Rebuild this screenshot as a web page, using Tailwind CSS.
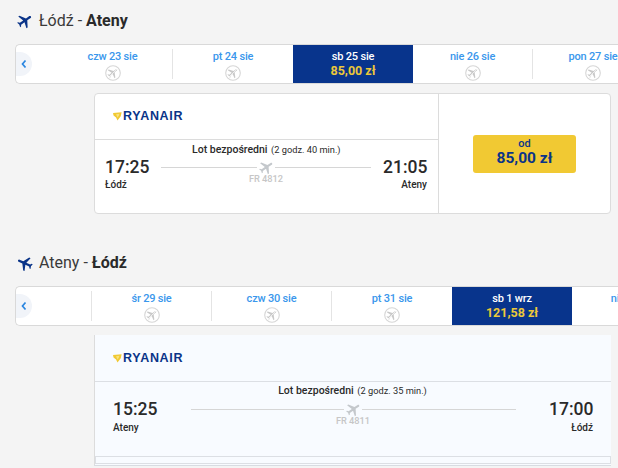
<!DOCTYPE html>
<html lang="pl">
<head>
  <meta charset="UTF-8">
  <meta name="viewport" content="width=device-width, initial-scale=1.0">
  <title>Loty Łódź - Ateny</title>
  <script src="https://cdn.jsdelivr.net/npm/@tailwindcss/browser@4"></script>
</head>
<body class="w-[618px] h-[468px] overflow-hidden bg-[#f4f4f4] font-['Roboto',sans-serif] text-[#2a2a2a]">
  <svg class="hidden">
    <symbol id="plane" viewBox="0 0 24 24"><path d="M21 16v-2l-8-5V3.5c0-.83-.67-1.5-1.5-1.5S10 2.67 10 3.5V9l-8 5v2l8-2.5V19l-2 1.5V22l3.5-1 3.5 1v-1.5L13 19v-5.5l8 2.5z"/></symbol>
    <symbol id="noflight" viewBox="0 0 16 16">
      <circle cx="8" cy="8" r="7.3" fill="#fff" stroke="#d6d6d6" stroke-width="1.1"/>
      <g transform="rotate(50 8 8) translate(1.4 1.4) scale(.55)" fill="#c9c9c9"><path d="M21 16v-2l-8-5V3.5c0-.83-.67-1.5-1.5-1.5S10 2.67 10 3.5V9l-8 5v2l8-2.5V19l-2 1.5V22l3.5-1 3.5 1v-1.5L13 19v-5.5l8 2.5z"/></g>
      <path d="M3.5 12.5 12.5 3.5" stroke="#fff" stroke-width=".7"/>
    </symbol>
    <symbol id="harp" viewBox="0 0 10 10"><path d="M0 1.2 9.6.4 8.6 4.6 5 9.4 3.4 6 .6 3.8z" fill="#f1c933"/><path d="M3.4 2.4 7.2 2 6.4 4.2 5 6.2z" fill="#f8e27e"/></symbol>
    <symbol id="chevron" viewBox="0 0 6 10"><path d="M4.5 1.5 1.5 5l3 3.5" fill="none" stroke="#2a86e0" stroke-width="1.7"/></symbol>
  </svg>

  <!-- wylot -->
  <section class="h-[240px]">
    <h2 class="flex items-center h-[42px] pl-[16px] text-[16px] leading-none">
      <svg class="w-[18px] h-[18px] fill-[#0a3488] rotate-[55deg]"><use href="#plane"/></svg>
      <span class="ml-[5px] text-[#3a3a3a]">Łódź - <b class="font-bold text-[#2a2a2a]">Ateny</b></span>
    </h2>
    <div class="relative flex ml-[15px] mt-[2px] w-[640px] h-[40px] bg-white border border-[#d9d9d9] border-r-0 rounded-[5px] overflow-hidden pl-[37px]">
      <button class="absolute left-0 top-[7px] w-[16px] h-[24px] bg-[#f1f4f9] rounded-r-full flex items-center justify-center"><svg class="w-[6px] h-[10px]"><use href="#chevron"/></svg></button>
      <div class="w-[120px] shrink-0 my-[4px] border-r border-[#e4e4e4] flex flex-col items-center text-[#3a97ec] text-[11px] tracking-[-.2px] font-medium leading-none pt-[2px]">czw 23 sie<svg class="w-[16px] h-[16px] shrink-0 mt-[3px]"><use href="#noflight"/></svg></div>
      <div class="w-[120px] shrink-0 my-[4px] flex flex-col items-center text-[#3a97ec] text-[11px] tracking-[-.2px] font-medium leading-none pt-[2px]">pt 24 sie<svg class="w-[16px] h-[16px] shrink-0 mt-[3px]"><use href="#noflight"/></svg></div>
      <div class="w-[120px] shrink-0 bg-[#08348c] flex flex-col items-center text-white text-[11px] tracking-[-.2px] font-medium leading-none pt-[6px]">sb 25 sie<span class="mt-[3px] text-[#ecc83a] text-[12.5px] tracking-normal font-bold">85,00 zł</span></div>
      <div class="w-[120px] shrink-0 my-[4px] border-r border-[#e4e4e4] flex flex-col items-center text-[#3a97ec] text-[11px] tracking-[-.2px] font-medium leading-none pt-[2px]">nie 26 sie<svg class="w-[16px] h-[16px] shrink-0 mt-[3px]"><use href="#noflight"/></svg></div>
      <div class="w-[120px] shrink-0 my-[4px] flex flex-col items-center text-[#3a97ec] text-[11px] tracking-[-.2px] font-medium leading-none pt-[2px]">pon 27 sie<svg class="w-[16px] h-[16px] shrink-0 mt-[3px]"><use href="#noflight"/></svg></div>
    </div>
    <div class="flex ml-[94px] mt-[9px] w-[517px] h-[121px] bg-white border border-[#dcdcdc] rounded-[4px] overflow-hidden">
      <div class="w-[344px] border-r border-[#dcdcdc]">
        <div class="flex items-center h-[46px] pl-[18px] border-b border-[#dcdcdc]">
          <svg class="w-[9px] h-[9px]"><use href="#harp"/></svg>
          <span class="ml-[1px] font-['Liberation_Sans',sans-serif] font-bold text-[12.5px] tracking-[.7px] leading-none text-[#0a3488]">RYANAIR</span>
        </div>
        <p class="mt-[4px] pl-[97px] text-[10.5px] leading-[12px] font-medium">Lot bezpośredni <span class="ml-[1px] text-[9.25px] font-normal">(2 godz. 40 min.)</span></p>
        <div class="flex px-[10px]">
          <div class="w-[44px]"><div class="text-[17.5px] font-medium leading-[22px]">17:25</div><div class="mt-[1px] text-[10px] leading-[12px] font-medium">Łódź</div></div>
          <div class="w-[210px] mx-[12px] flex flex-col items-center">
            <div class="relative w-[210px] h-[22px] flex justify-center items-center"><div class="absolute inset-x-0 top-[11px] border-t border-[#d6d6d6]"></div><div class="relative w-[18px] h-[12px] bg-white flex items-center justify-center"><svg class="w-[17px] h-[17px] shrink-0 fill-[#c4c8cc] rotate-[55deg]"><use href="#plane"/></svg></div></div>
            <div class="relative -mt-[4px] text-[9.25px] leading-[10px] text-[#c6c6c6] font-medium">FR 4812</div>
          </div>
          <div class="w-[44px] text-right"><div class="text-[17.5px] font-medium leading-[22px]">21:05</div><div class="mt-[1px] text-[10px] leading-[12px] font-medium">Ateny</div></div>
        </div>
      </div>
      <div class="flex-1 flex items-center justify-center pt-[1px]">
        <div class="w-[103px] h-[38px] pb-[3px] bg-[#f1c933] rounded-[3px] flex flex-col items-center justify-center text-[#0a3488] leading-none">
          <span class="text-[11px] font-medium">od</span>
          <span class="mt-[2px] text-[15.5px] font-bold">85,00 zł</span>
        </div>
      </div>
    </div>
  </section>

  <!-- powrot -->
  <section>
    <h2 class="flex items-center h-[46px] pl-[16px] text-[16px] leading-none">
      <svg class="w-[18px] h-[18px] fill-[#0a3488] -rotate-[65deg]"><use href="#plane"/></svg>
      <span class="ml-[5px] text-[#3a3a3a]">Ateny - <b class="font-bold text-[#2a2a2a]">Łódź</b></span>
    </h2>
    <div class="relative flex ml-[15px] w-[640px] h-[40px] bg-white border border-[#d9d9d9] border-r-0 rounded-[5px] overflow-hidden">
      <button class="absolute left-0 top-[7px] w-[16px] h-[24px] bg-[#f1f4f9] rounded-r-full flex items-center justify-center"><svg class="w-[6px] h-[10px]"><use href="#chevron"/></svg></button>
      <div class="w-[76px] shrink-0 my-[4px] border-r border-[#e4e4e4]"></div>
      <div class="w-[120px] shrink-0 my-[4px] border-r border-[#e4e4e4] flex flex-col items-center text-[#3a97ec] text-[11px] tracking-[-.2px] font-medium leading-none pt-[2px]">śr 29 sie<svg class="w-[16px] h-[16px] shrink-0 mt-[3px]"><use href="#noflight"/></svg></div>
      <div class="w-[120px] shrink-0 my-[4px] border-r border-[#e4e4e4] flex flex-col items-center text-[#3a97ec] text-[11px] tracking-[-.2px] font-medium leading-none pt-[2px]">czw 30 sie<svg class="w-[16px] h-[16px] shrink-0 mt-[3px]"><use href="#noflight"/></svg></div>
      <div class="w-[120px] shrink-0 my-[4px] flex flex-col items-center text-[#3a97ec] text-[11px] tracking-[-.2px] font-medium leading-none pt-[2px]">pt 31 sie<svg class="w-[16px] h-[16px] shrink-0 mt-[3px]"><use href="#noflight"/></svg></div>
      <div class="w-[120px] shrink-0 bg-[#08348c] flex flex-col items-center text-white text-[11px] tracking-[-.2px] font-medium leading-none pt-[6px]">sb 1 wrz<span class="mt-[3px] text-[#ecc83a] text-[12.5px] tracking-normal font-bold">121,58 zł</span></div>
      <div class="w-[120px] shrink-0 my-[4px] flex flex-col items-center text-[#3a97ec] text-[11px] tracking-[-.2px] font-medium leading-none pt-[2px]">nie 2 wrz</div>
    </div>
    <div class="ml-[94px] mt-[9px] w-[517px] h-[130px] bg-[#f8fbff] border-l border-[#dcdcdc] shadow-[0_1px_0_#d8dce2]">
      <div class="flex items-center h-[47px] pl-[18px] border-b border-[#dcdfe4]">
        <svg class="w-[9px] h-[9px]"><use href="#harp"/></svg>
        <span class="ml-[1px] font-['Liberation_Sans',sans-serif] font-bold text-[12.5px] tracking-[.7px] leading-none text-[#0a3488]">RYANAIR</span>
      </div>
      <p class="mt-[3px] text-center text-[10.5px] leading-[12px] font-medium pr-[1px]">Lot bezpośredni <span class="ml-[1px] text-[9.25px] font-normal">(2 godz. 35 min.)</span></p>
      <div class="flex justify-between px-[18px] mt-[1px]">
        <div class="w-[44px]"><div class="text-[17.5px] font-medium leading-[22px]">15:25</div><div class="mt-[2px] text-[10px] leading-[12px] font-medium">Ateny</div></div>
        <div class="flex flex-col items-center">
          <div class="relative w-[325px] h-[22px] flex justify-center items-center"><div class="absolute inset-x-0 top-[11px] border-t border-[#d6d6d6]"></div><div class="relative w-[18px] h-[12px] bg-[#f8fbff] flex items-center justify-center"><svg class="w-[17px] h-[17px] shrink-0 fill-[#c4c8cc] rotate-[55deg]"><use href="#plane"/></svg></div></div>
          <div class="relative -mt-[4px] text-[9.25px] leading-[10px] text-[#c6c6c6] font-medium">FR 4811</div>
        </div>
        <div class="w-[44px] text-right"><div class="text-[17.5px] font-medium leading-[22px]">17:00</div><div class="mt-[2px] text-[10px] leading-[12px] font-medium">Łódź</div></div>
      </div>
      <div class="h-[8px] mt-[22px] border border-[#dcdfe4]"></div>
    </div>
  </section>
</body>
</html>
